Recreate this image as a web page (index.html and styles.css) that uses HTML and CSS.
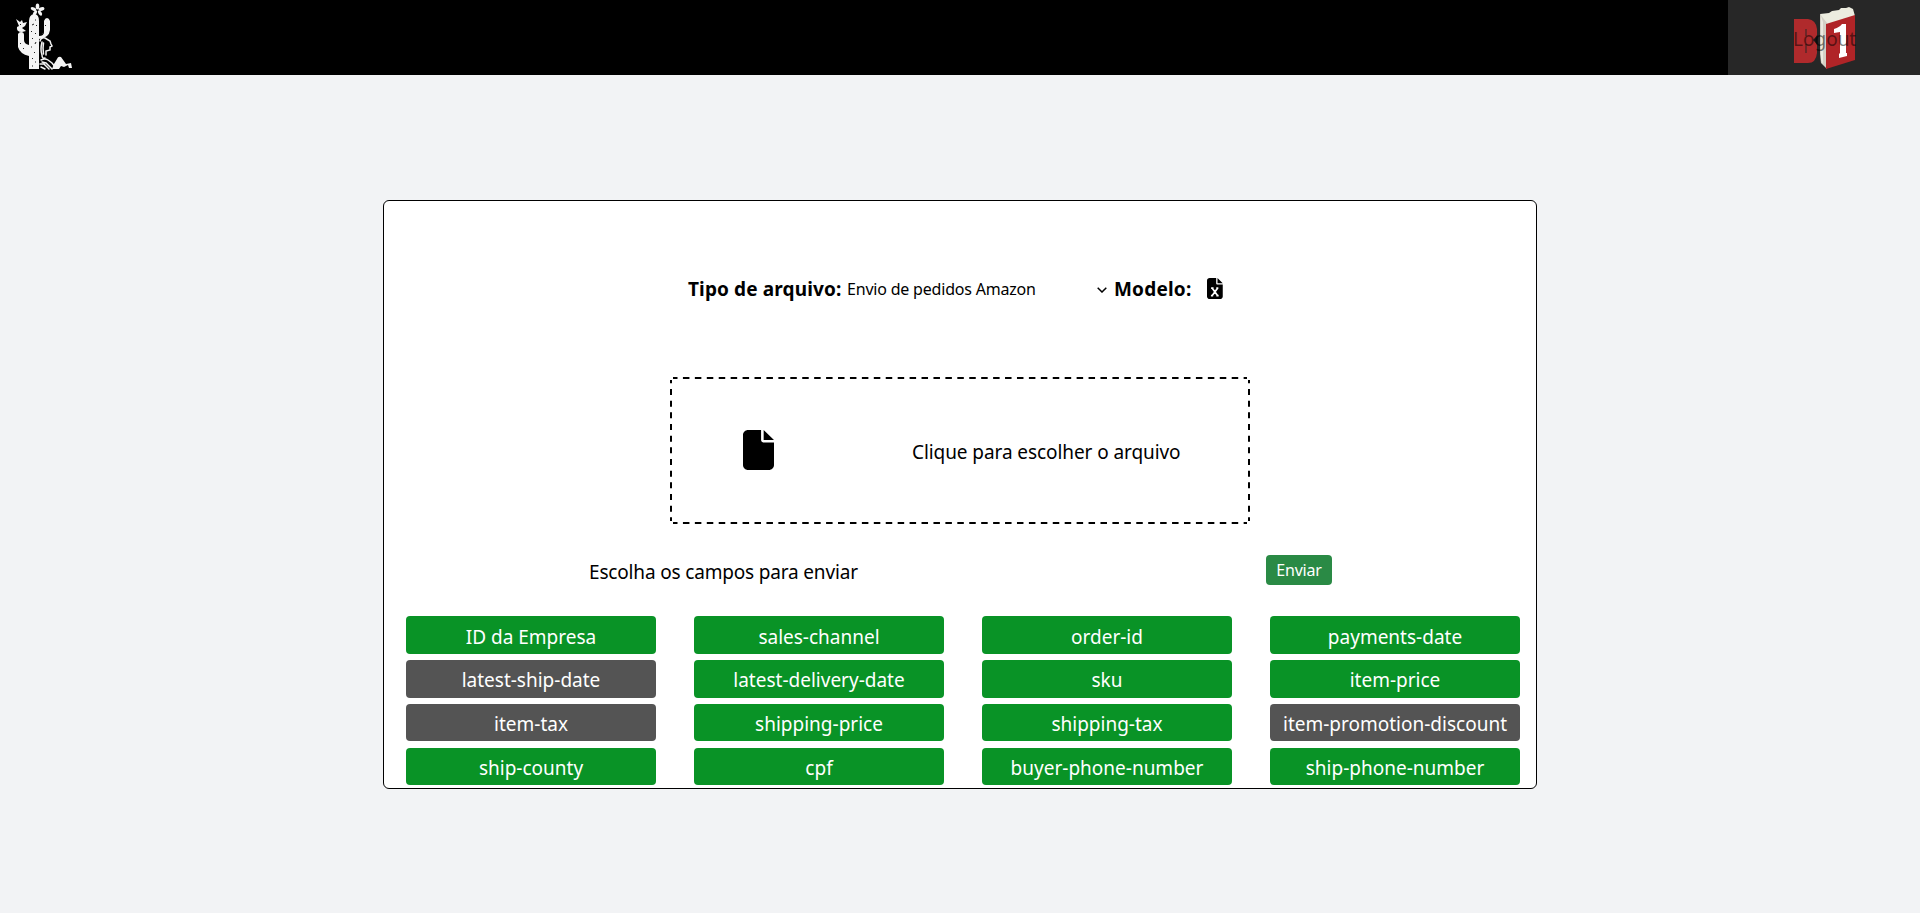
FILE: index.html
```html
<!DOCTYPE html>
<html lang="pt-BR">
<head>
<meta charset="utf-8">
<title>Envio de pedidos</title>
<link rel="stylesheet" href="styles.css">
</head>
<body>
<header class="topbar">
  <svg class="brand" viewBox="0 0 90 75" width="90" height="75">
    <g fill="#f4f4f4">
      <path d="M29 69V21q0-6 5-7 5 0 5 7v15q5 0 5-4V21q1-3 3-3 2 0 3 3v9q-1 8-11 9v30z"/>
      <path d="M29 56q-9-2-11-9V34q1-2 3-2 3 0 3 3v5q0 4 5 5z"/>
      <path d="M16 19l4 3 2-2 1 3 4-1-2 4-3 2 4 3-4 1q-6 0-5-5l2-1z"/>
      <ellipse cx="37.500" cy="6.500" rx="1.800" ry="3"/>
      <ellipse cx="41.500" cy="9" rx="1.700" ry="3" transform="rotate(75 41.500 9)"/>
      <ellipse cx="40" cy="13" rx="1.600" ry="2.900" transform="rotate(-35 40 13)"/>
      <ellipse cx="35" cy="13" rx="1.600" ry="2.900" transform="rotate(35 35 13)"/>
      <ellipse cx="33.500" cy="9" rx="1.700" ry="3" transform="rotate(-65 33.500 9)"/>
      <path d="M52 69q2-6 5-10 1-3 4-2l5 7 5-1 1 5h-3l-1-3-4 2-3-1-2 3z"/>
    </g>
    <g fill="none" stroke="#f4f4f4" stroke-linecap="round" stroke-width="1.500">
      <path d="M40 41q1-4 5-3l5 3 1 3 1 2-2 1v3l-4 1v4M42 42q-2 8 0 13 0 4 3 3M43.500 43q-1 5 0 11M41 60q4-2 7 0l4 3 4 5M40 64l4 0 5 5M42 62l4 1 6 6M41 67l4 2"/>
    </g>
    <path d="M32 25l2-1M35 20l1 0M31 31l1 1M35 34l1-1M32 39l1-1M36 42l-1 2M31 47l1 0M34 52l1 1M32 59l1-1M35 62l1 0M32 66l1 0M36 25l1 1M45 25l1 1M42 34l1-1M20 43l1 1M23 48l1 1M20 24l1 1" stroke="#222" stroke-width="1"/>
  </svg>
  <div class="logout">
    <svg class="logo" viewBox="0 0 66 66" width="66" height="66">
      <path d="M3 13h14q8 1 9 10v6l-3 5 3 5v8q-1 10-9 10H3z" fill="#b02a2c"/>
      <path d="M15 23v7M15 38v9" stroke="#572728" stroke-width="1.500"/>
      <path d="M22 34l5-5v10z" fill="#181818"/>
      <path d="M29 8l9-1 3-2 7-1 2-2h5l3-1 4 2 2 7-30 12z" fill="#ececdf"/>
      <path d="M29 8l7 9v46l-6-6-1-9z" fill="#d3d0c5"/>
      <path d="M30 10l2 6v42l-2-4z" fill="#eceae0"/>
      <path d="M35 18l29-9v45l-29 9z" fill="#b02427"/>
      <path d="M43 23q6-2 8-5h4v29h1v3l-8 2v-4l1-1V26l-6 1z" fill="#fff"/>
    </svg>
    <span class="t logout-label">Logout</span>
  </div>
</header>
<main class="card">
  <div class="type-row">
    <strong class="t type-label">Tipo de arquivo:</strong>
    <div class="select"><span class="t select-label">Envio de pedidos Amazon</span>
      <svg width="10" height="6" viewBox="0 0 10 6"><path d="M.7 .7l4.300 4.300 4.300-4.300" fill="none" stroke="#000" stroke-width="1.500"/></svg>
    </div>
    <strong class="t model-label">Modelo:</strong>
    <svg class="excel" viewBox="0 0 384 512" width="15.750" height="21"><path d="M0 64C0 28.700 28.700 0 64 0H224V128c0 17.700 14.300 32 32 32H384V448c0 35.300-28.700 64-64 64H64c-35.300 0-64-28.700-64-64zM256 0l128 128H256z"/><path d="M124 246L260 432M262 246L124 432M100 246h60M226 246h50M96 432h54M228 432h56" fill="none" stroke="#fff" stroke-width="42"/></svg>
  </div>
  <div class="dropzone">
    <svg class="outline" width="580" height="147" viewBox="0 0 580 147">
      <g fill="none" stroke="#000" stroke-width="2">
        <path d="M3 1H577M3 146H577" stroke-dasharray="6.500 5.430" stroke-dashoffset="2"/>
        <path d="M1 3V144M579 3V144" stroke-dasharray="6 5.670" stroke-dashoffset="2.670"/>
      </g>
    </svg>
    <svg class="file" viewBox="0 0 384 512" width="31" height="40" preserveAspectRatio="none"><path d="M0 64C0 28.700 28.700 0 64 0H224V128c0 17.700 14.300 32 32 32H384V448c0 35.300-28.700 64-64 64H64c-35.300 0-64-28.700-64-64zM256 0l128 128H256z"/></svg>
    <span class="t drop-label">Clique para escolher o arquivo</span>
  </div>
  <div class="send-row">
    <span class="t fields-label">Escolha os campos para enviar</span>
    <button class="send"><span class="t">Enviar</span></button>
  </div>
  <div class="fields">
    <div class="field">ID da Empresa</div><div class="field">sales-channel</div><div class="field">order-id</div><div class="field">payments-date</div>
    <div class="field off">latest-ship-date</div><div class="field">latest-delivery-date</div><div class="field">sku</div><div class="field">item-price</div>
    <div class="field off">item-tax</div><div class="field">shipping-price</div><div class="field">shipping-tax</div><div class="field off">item-promotion-discount</div>
    <div class="field">ship-county</div><div class="field">cpf</div><div class="field">buyer-phone-number</div><div class="field">ship-phone-number</div>
  </div>
</main>
</body>
</html>
```
FILE: styles.css
```css
* { box-sizing: border-box; }
body { margin: 0; height: 913px; overflow: hidden; background: #f2f3f5; color: #000; font: 19px/27px "Noto Sans", sans-serif; }
.t { white-space: nowrap; }
svg { display: block; flex: none; }
.topbar { height: 75px; display: flex; justify-content: space-between; background: #000; }
.logout { position: relative; width: 192px; height: 75px; background: #272727; display: flex; justify-content: center; padding-top: 6px; }
.logout-label { position: absolute; left: 65px; top: 26px; color: rgba(0, 0, 0, .5); }
.card { width: 1154px; height: 589px; margin: 125px auto 0; border: 1px solid #000; border-radius: 6px; background: #fff; overflow: hidden; }
.type-row { display: flex; align-items: center; height: 30px; margin: 73px 0 0 304px; }
.type-label { width: 159px; letter-spacing: .13px; }
.select { width: 260px; margin-right: 6px; display: flex; align-items: center; justify-content: space-between; font-size: 16px; padding-top: 1px; }
.select-label { letter-spacing: -.2px; }
.model-label { width: 93px; margin-left: 1px; letter-spacing: .2px; }
.excel { margin-top: -2px; }
.dropzone { position: relative; width: 580px; height: 147px; margin: 73px auto 0; display: flex; align-items: center; padding-left: 73px; }
.outline { position: absolute; inset: 0; }
.file { margin-top: -1px; }
.drop-label { margin: 3px 0 0 138px; letter-spacing: -.08px; }
.send-row { display: flex; height: 30px; margin-top: 31px; padding-left: 205px; }
.fields-label { width: 677px; padding-top: 4px; letter-spacing: -.17px; }
.send { width: 66px; height: 30px; padding: 1px 0 0; border: 0; border-radius: 4px; background: #2a8a45; color: #fff; font: 16px/29px "Noto Sans", sans-serif; letter-spacing: -.2px; }
.fields { display: grid; grid-template-columns: repeat(4, 250px); column-gap: 38px; row-gap: 6.4px; padding: 31.4px 0 0 22px; }
.field { height: 37.4px; padding-top: 1px; border-radius: 4px; background: #099326; color: #fff; line-height: 38px; text-align: center; white-space: nowrap; }
.field:nth-child(-n+4) { padding-top: 2px; }
.off { background: #545454; }
```
